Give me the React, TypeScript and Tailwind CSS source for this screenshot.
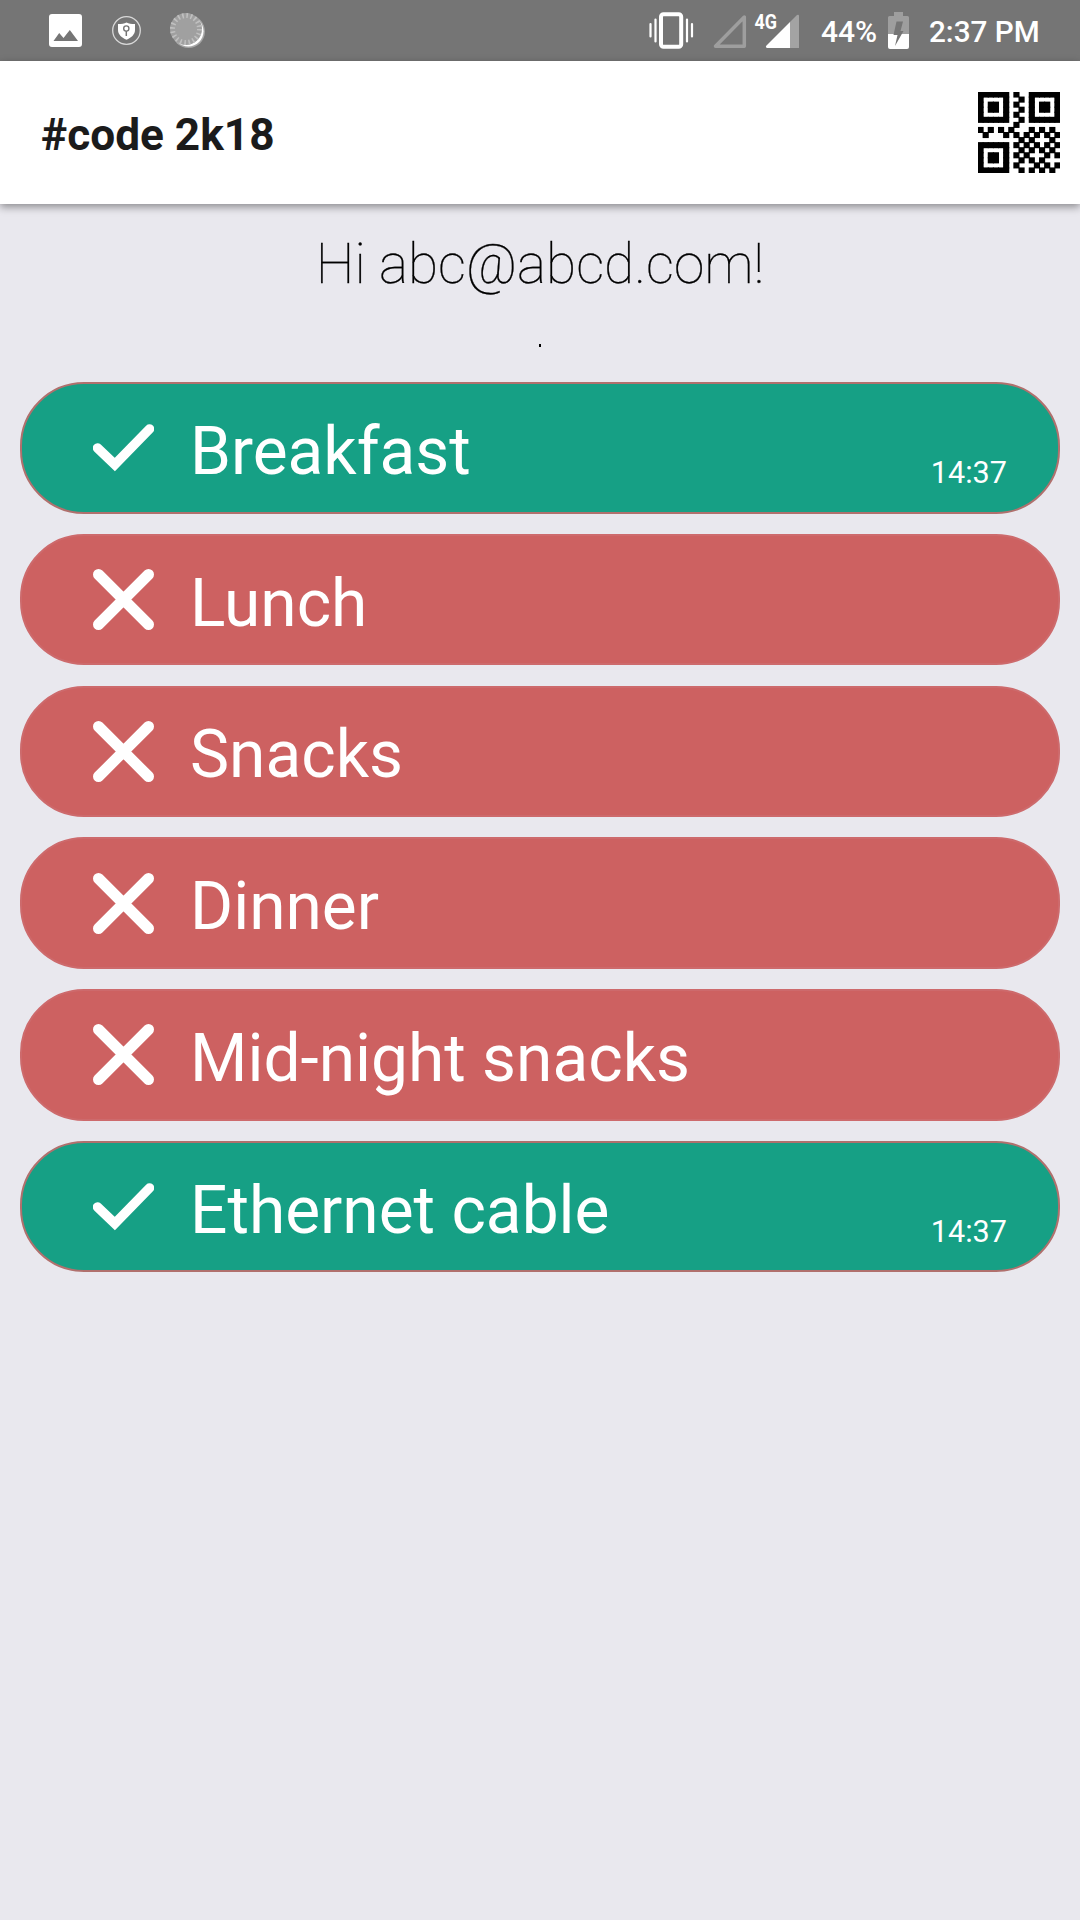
import React from "react";

const items = [
  { title: "Breakfast", time: "14:37" },
  { title: "Lunch" },
  { title: "Snacks" },
  { title: "Dinner" },
  { title: "Mid-night snacks" },
  { title: "Ethernet cable", time: "14:37" },
];

const qrRows = [
  "111111.1..111111",
  "1....1..1.1....1",
  "1.11.1.1..1.11.1",
  "1.11.1..1.1.11.1",
  "1....1.1..1....1",
  "111111..1.111111",
  ".......1........",
  "1.1.1.1...1.1.1.",
  ".1...1.1.1.1.1.1",
  "........1.1...1.",
  "111111.1.1.1.1.1",
  "1....1..1.1.1.1.",
  "1.11.1.1.1...1.1",
  "1.11.1..1.1.1...",
  "1....1.1...1.1.1",
  "111111..1.1.1.1.",
];

const QrCode = () => (
  <svg width="82" height="81" viewBox="0 0 16 16" preserveAspectRatio="none">
    {qrRows.map((row, y) =>
      row.split("").map((cell, x) =>
        cell === "1" ? <rect key={`${x}-${y}`} x={x - 0.1} y={y - 0.1} width="1.2" height="1.2" /> : null
      )
    )}
  </svg>
);

const StatusBar = () => (
  <div className="flex h-[61px] shrink-0 items-start bg-[#757575] text-white">
    {/* notifications */}
    <svg width="220" height="61" viewBox="0 0 220 61">
      <path fill="#fff" fillRule="evenodd" d="M52 14h27a3 3 0 0 1 3 3v27a3 3 0 0 1-3 3H52a3 3 0 0 1-3-3V17a3 3 0 0 1 3-3zM53.5 41h24.5l-8.2-11-6.3 8-4.3-5z" />
      <circle cx="126.5" cy="30.5" r="13.8" fill="none" stroke="#d8d8d8" strokeWidth="1.3" />
      <path fill="#fff" d="M118 24c4 0 6-.6 8.5-1.6 2.5 1 4.5 1.6 8.5 1.6v6c0 4.5-4 8-8.5 9.7-4.5-1.7-8.5-5.2-8.5-9.7z" />
      <circle cx="126.3" cy="28.5" r="2.6" fill="none" stroke="#757575" strokeWidth="1.4" />
      <path d="M126.3 31v5" stroke="#757575" strokeWidth="1.5" />
      <circle cx="188.5" cy="31.5" r="16.5" fill="#a6a6a6" />
      <circle cx="188.3" cy="31.3" r="15.2" fill="#fff" />
      <circle cx="186" cy="29" r="16" fill="#a0a0a0" />
      <circle cx="186" cy="29" r="13.5" fill="none" stroke="#c0c0c0" strokeWidth="5" strokeDasharray="1.6 2.64" />
    </svg>
    <div className="flex-1" />
    {/* vibrate, signal */}
    <svg width="170" height="61" viewBox="645 0 170 61">
      <rect x="661" y="14.2" width="20.2" height="32.6" rx="2.5" fill="none" stroke="#fff" strokeWidth="4" />
      <path d="M650.5 24v12.5M655.5 19.5v22M687 19.5v22M692 24v12.5" stroke="#fff" strokeWidth="2.2" strokeLinecap="round" />
      <path d="M744.3 17v29.3H715.5z" fill="none" stroke="#9e9e9e" strokeWidth="3.5" strokeLinejoin="round" />
      <path d="M797 15q2-1 2 1v32h-9V22z" fill="#a3a3a3" />
      <path d="M790 22v26h-23q-2-1-.5-2.5z" fill="#fff" />
      <text x="754.5" y="28.5" fill="#fff" fontFamily="Roboto, sans-serif" fontWeight="700" fontSize="20" textLength="22.5" lengthAdjust="spacingAndGlyphs">4G</text>
    </svg>
    <span className="ml-[6px] w-[67px] whitespace-nowrap text-[30px] font-medium leading-[63px]">44%</span>
    <svg width="22" height="61" viewBox="888 0 22 61">
      <path d="M894 12h9v4h4.5a1.5 1.5 0 0 1 1.5 1.5V34h-21V17.500a1.500 1.500 0 0 1 1.500-1.500h4.500z" fill="#9e9e9e" />
      <path d="M888 34h21v13a2 2 0 0 1-2 2h-17a2 2 0 0 1-2-2z" fill="#fff" />
      <path d="M896.500 21.500h6.500l-2.500 9.500h3l-8.500 15 2.500-11h-4z" fill="#757575" />
    </svg>
    <span className="ml-[19px] w-[151px] whitespace-nowrap text-[29.7px] font-medium leading-[63px]">2:37 PM</span>
  </div>
);

const StatusIcon = ({ done }: { done: boolean }) => (
  <svg className="ml-[71px] shrink-0" width="61" height="61" viewBox="0 0 61 61">
    <path
      d={done ? "M4.5 31L21.8 47.5L56.5 12" : "M5.5 5.5L55.5 55.5M55.5 5.5L5.5 55.5"}
      fill="none"
      stroke="#fff"
      strokeWidth={done ? 9.5 : 11}
      strokeLinecap="round"
    />
  </svg>
);

const App = () => {
  return (
    <div className="flex h-[1920px] w-[1080px] flex-col overflow-hidden bg-[#e9e8ee] font-['Roboto',sans-serif]">
      <StatusBar />
      <header className="flex h-[143px] shrink-0 items-start justify-between bg-white pl-[41px] pr-[20px] shadow-[0_3px_8px_rgba(0,0,0,0.4)]">
        <h1 className="mt-[46px] text-[44.2px] font-bold leading-[56px] text-[#1b1b1b]">#code 2k18</h1>
        <div className="mt-[31px]">
          <QrCode />
        </div>
      </header>
      <p className="mt-[24px] text-center text-[55px] font-thin leading-[72px] text-black [-webkit-text-stroke:0.3px_black]">
        Hi abc@abcd.com!
      </p>
      <div className="mt-[44px] flex h-[38px] justify-center">
        <span className="h-[3px] w-[2px] bg-black" />
      </div>
      <ul className="flex flex-col gap-[20.3px] px-[20px]">
        {items.map((item) => (
          <li
            key={item.title}
            className={`flex h-[131.5px] items-center rounded-[64px] border-2 text-white ${
              item.time ? "border-[#b0706d] bg-[#16a085]" : "border-[#cd6a6c] bg-[#cd6161]"
            }`}
          >
            <StatusIcon done={!!item.time} />
            <span className="ml-[36px] flex-1 pt-[8px] text-[65.8px] leading-[78px]">{item.title}</span>
            {item.time && <span className="mr-[51px] mt-[50px] text-[30.6px] leading-[36px]">{item.time}</span>}
          </li>
        ))}
      </ul>
    </div>
  );
};

export default App;
